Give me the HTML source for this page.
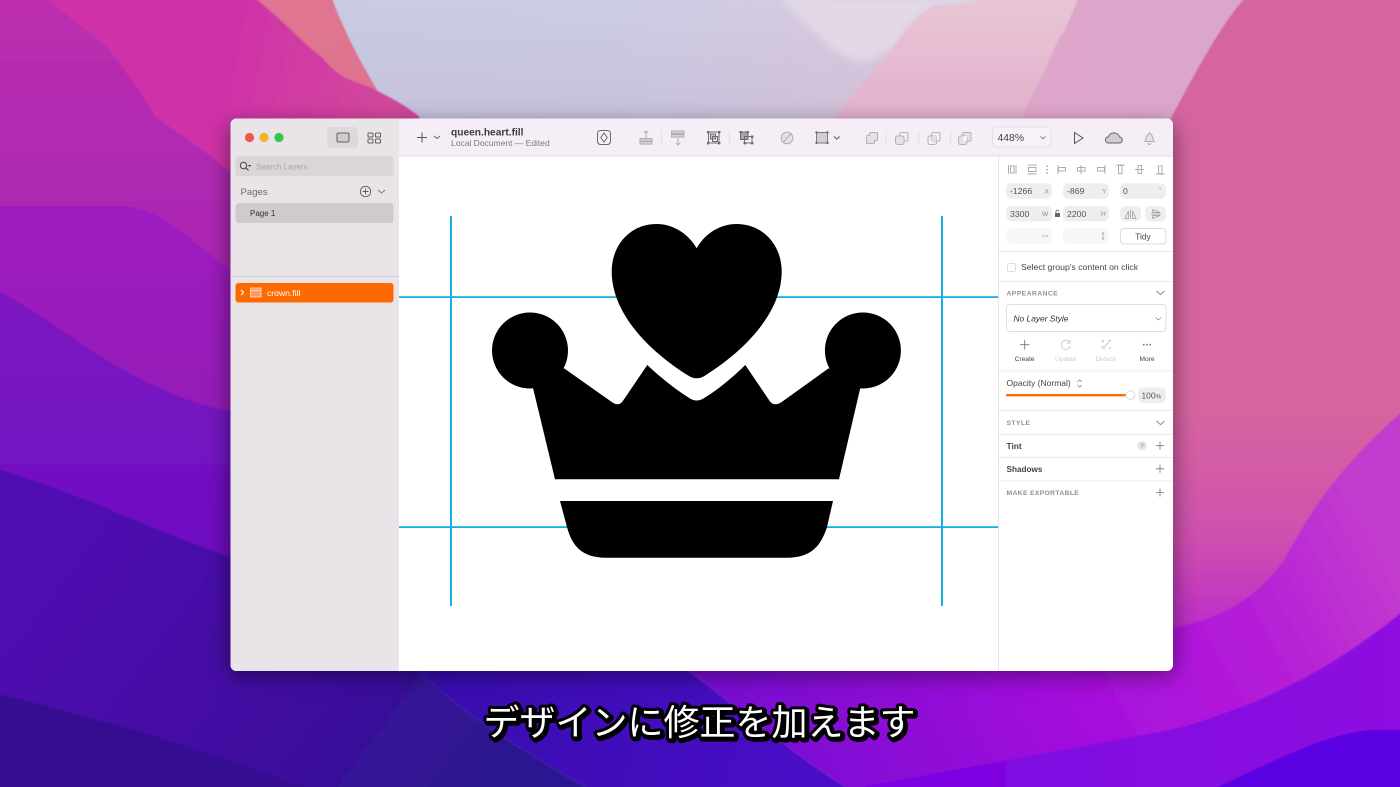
<!DOCTYPE html>
<html lang="ja">
<head>
<meta charset="utf-8">
<title>queen.heart.fill</title>
<style>
html,body{margin:0;padding:0;width:1400px;height:787px;overflow:hidden;background:#6010c0}
svg{display:block;position:absolute;left:0;top:0}
text{font-family:"Liberation Sans","Noto Sans CJK JP",sans-serif}
.il{fill:none;stroke:#b0adb0;stroke-width:1}
.pl{fill:none;stroke:#8c8c8c;stroke-width:1}
</style>
</head>
<body>
<svg width="1400" height="787" viewBox="0 0 1400 787" xmlns="http://www.w3.org/2000/svg">
<defs>
<linearGradient id="sky" gradientUnits="userSpaceOnUse" x1="330" x2="850" y1="0" y2="0"><stop offset="0" stop-color="#c9cce4"/><stop offset=".55" stop-color="#cccde4"/><stop offset="1" stop-color="#d8cbdf"/></linearGradient>
<linearGradient id="skyv" x1="0" x2="0" y1="0" y2="1"><stop offset="0" stop-color="#b8a0c4" stop-opacity="0"/><stop offset="1" stop-color="#b8a0c4" stop-opacity=".28"/></linearGradient>
<linearGradient id="sal" x1="0" x2="1" y1="0" y2="1"><stop offset="0" stop-color="#e17a94"/><stop offset="1" stop-color="#dc6c8a"/></linearGradient>
<linearGradient id="mag" gradientUnits="userSpaceOnUse" x1="100" x2="420" y1="0" y2="60"><stop offset=".45" stop-color="#cf33a8"/><stop offset=".9" stop-color="#d2469c"/></linearGradient>
<linearGradient id="pink" gradientUnits="userSpaceOnUse" x1="0" x2="0" y1="0" y2="787"><stop offset=".52" stop-color="#d6659f"/><stop offset=".68" stop-color="#ce50ae"/><stop offset=".8" stop-color="#bc2cc8"/><stop offset="1" stop-color="#a010dc"/></linearGradient>
<linearGradient id="bandp" x1="0" x2="0" y1="0" y2="1"><stop offset="0" stop-color="#e7c6d5"/><stop offset=".4" stop-color="#e3b0cc"/></linearGradient>
<linearGradient id="bandl" x1="0" x2="1" y1="0" y2="0"><stop offset="0" stop-color="#e0a6cb"/><stop offset="1" stop-color="#d8a6cc"/></linearGradient>
<linearGradient id="lb" gradientUnits="userSpaceOnUse" x1="0" x2="0" y1="0" y2="210"><stop offset="0" stop-color="#bc2eae"/><stop offset="1" stop-color="#ac28b2"/></linearGradient>
<linearGradient id="s2" gradientUnits="userSpaceOnUse" x1="0" x2="0" y1="207" y2="400"><stop offset="0" stop-color="#a01ec0"/><stop offset="1" stop-color="#941cb8"/></linearGradient>
<linearGradient id="s3" gradientUnits="userSpaceOnUse" x1="0" x2="0" y1="291" y2="540"><stop offset="0" stop-color="#7c14c0"/><stop offset="1" stop-color="#6e10c2"/></linearGradient>
<linearGradient id="s4" gradientUnits="userSpaceOnUse" x1="60" x2="470" y1="480" y2="787"><stop offset="0" stop-color="#5010b2"/><stop offset=".55" stop-color="#420ea2"/><stop offset="1" stop-color="#2c1490"/></linearGradient>
<linearGradient id="rm" gradientUnits="userSpaceOnUse" x1="780" x2="1340" y1="770" y2="470"><stop offset="0" stop-color="#7a0cd2"/><stop offset=".45" stop-color="#a40edc"/><stop offset=".75" stop-color="#b41cd8"/><stop offset="1" stop-color="#c23cce"/></linearGradient>
<linearGradient id="rm2" gradientUnits="userSpaceOnUse" x1="850" x2="1400" y1="0" y2="0"><stop offset="0" stop-color="#7804e2"/><stop offset="1" stop-color="#8e0ce0"/></linearGradient>
<linearGradient id="ctr" gradientUnits="userSpaceOnUse" x1="430" x2="840" y1="670" y2="787"><stop offset="0" stop-color="#380cae"/><stop offset="1" stop-color="#4a08c8"/></linearGradient>
<filter id="sh" x="-10%" y="-10%" width="120%" height="125%"><feGaussianBlur stdDeviation="11"/></filter>
<filter id="soft" x="-2%" y="-2%" width="104%" height="104%"><feGaussianBlur stdDeviation=".2"/></filter>
<filter id="bg" filterUnits="userSpaceOnUse" x="-20" y="-20" width="1440" height="830"><feGaussianBlur stdDeviation=".7"/></filter>
<filter id="bw" filterUnits="userSpaceOnUse" x="700" y="-20" width="320" height="140"><feGaussianBlur stdDeviation="3.5"/></filter>
<clipPath id="win"><rect x="230.5" y="118.5" width="942.5" height="552.5" rx="6"/></clipPath>
</defs>

<!-- wallpaper -->
<g filter="url(#bg)" transform="translate(700 393.5) scale(1.006) translate(-700 -393.5)">
<rect width="1400" height="787" fill="#c9cce4"/>
<rect x="300" width="800" height="320" fill="url(#sky)"/>
<rect x="300" y="0" width="800" height="125" fill="url(#skyv)"/>
<path d="M780,0 L830,50 Q850,66 870,62 L892,50 C900,40 910,20 932,8 Q965,7 990,0Z" fill="#e2d8e6" filter="url(#bw)"/>
<path d="M932,8 C910,20 900,40 892,50 L834,118 L834,300 L1100,300 L1076,0 L990,0 Q965,7 932,8Z" fill="url(#bandp)"/>
<path d="M1076,0 C1070,15 1065,30 1057,40 C1040,80 1030,95 1021,118 L1021,300 L1250,300 L1250,0Z" fill="url(#bandl)"/>
<path d="M1242,0 C1225,18 1205,50 1169,118 L1100,300 L1000,660 L1000,787 L1400,787 L1400,0Z" fill="url(#pink)"/>
<path d="M257,0 L334,0 C345,30 360,60 380,93 L421,118 L300,300 L0,300Z" fill="url(#sal)"/>
<path d="M0,0 H257 C285,22 305,45 325,60 C345,85 360,82 380,93 Q405,105 421,118 L421,300 L0,400Z" fill="url(#mag)"/>
<path d="M0,0 H49 C80,25 100,40 112,50 C130,75 143,90 158,118 C175,130 205,150 232,172 L420,300 L420,500 L0,500Z" fill="url(#lb)"/>
<path d="M0,207 H130 C170,212 190,240 232,269 L420,360 L420,600 L0,600Z" fill="url(#s2)"/>
<path d="M0,291 C40,310 70,335 100,354 C150,385 190,403 232,411 L420,500 L420,668 L0,700Z" fill="url(#s3)"/>
<path d="M0,468 C40,480 70,492 100,503 C150,525 190,540 232,556 L420,640 L420,668 C450,700 500,735 590,787 L0,787Z" fill="url(#s4)"/>
<path d="M0,692 C40,700 70,710 100,718 C170,735 250,765 312,787 L0,787Z" fill="#351090"/>
<path d="M420,640 L420,668 C450,700 500,735 590,787 L848,787 C786,748 730,700 687,668 L687,640Z" fill="url(#ctr)"/>
<path d="M1400,409 C1350,455 1320,486 1280,560 C1250,600 1220,615 1173,626 L1000,640 L687,640 L687,668 C730,700 786,748 848,787 L1400,787Z" fill="url(#rm)"/>
<path d="M1400,609 C1340,657 1280,696 1173,727 L848,787 H1400Z" fill="url(#rm2)"/>
<path d="M1400,728 L1370,728 C1330,730 1290,749 1210,787 H1400Z" fill="#5a02e2"/>
</g>

<!-- window shadow -->
<rect x="228" y="124" width="947" height="552" rx="8" fill="#000" opacity=".42" filter="url(#sh)"/>

<g clip-path="url(#win)">
<rect x="230" y="118" width="944" height="554" fill="#fff"/>
<rect x="230" y="118" width="169" height="554" fill="#e8e4e7"/>
<rect x="399" y="118" width="775" height="38" fill="#f6eef6"/>
<rect x="399" y="155.5" width="775" height="1" fill="#dfdadf"/>
<rect x="998" y="156" width="1" height="516" fill="#e6e6e6"/>
</g>

<!-- canvas guides -->
<g fill="#16b0e4">
<rect x="399" y="296.2" width="599" height="1.8"/>
<rect x="399" y="526.2" width="599" height="1.8"/>
<rect x="450" y="216" width="2" height="390"/>
<rect x="941" y="216" width="2" height="390"/>
</g>

<!-- crown -->
<g fill="#000">
<path d="M696.7,248.3 C688,233 672,224 656.7,224 C630,224 611.7,245 611.7,271.5 C611.7,312 647,350 689,376 C694,379 699.4,379 704.4,376 C746,350 781.7,312 781.7,271.5 C781.7,245 763,224 736.5,224 C721,224 705,233 696.7,248.3Z"/>
<circle cx="530" cy="350.5" r="38"/>
<circle cx="862.9" cy="350.5" r="38"/>
<path d="M533,388 L564,368.3 L612.5,402.5 Q618.5,406.5 622.5,401.5 L647.3,365 C662,379 678,391 690,398.5 Q696.7,402.5 703.4,398.5 C716,391 731,379 745.3,365 L770,401.5 Q774,406.5 781,402.5 L828.7,368.3 L860.3,388 L839,479.3 L555,479.3Z"/>
<path d="M560,501 L833,501 L827,527 C821,546 811,557.7 787,557.7 L606,557.7 C582,557.7 572,546 567,527Z"/>
</g>

<g filter="url(#soft)">
<!-- traffic lights -->
<circle cx="249.5" cy="137.5" r="4.6" fill="#f0584f"/>
<circle cx="264" cy="137.5" r="4.6" fill="#f4b42c"/>
<circle cx="279" cy="137.5" r="4.6" fill="#30c748"/>

<!-- view tabs -->
<rect x="327" y="127" width="31" height="21" rx="4" fill="#dcd8dc"/>
<rect x="337" y="133" width="12" height="9" rx="1.5" fill="#cfcbcf" stroke="#646264" stroke-width="1"/>
<g fill="none" stroke="#646264" stroke-width="1">
<rect x="368" y="133" width="5" height="4" rx=".8"/><rect x="375.5" y="133" width="5" height="4" rx=".8"/>
<rect x="368" y="139" width="5" height="4" rx=".8"/><rect x="375.5" y="139" width="5" height="4" rx=".8"/>
</g>

<!-- search -->
<rect x="235.5" y="156" width="158" height="20" rx="3" fill="#d9d5d9"/>
<circle cx="243.5" cy="165.5" r="3.2" fill="none" stroke="#444" stroke-width="1"/>
<path d="M246,168 L248.5,170.5" stroke="#444" stroke-width="1.1"/>
<path d="M248,165 h3.4 l-1.7,2z" fill="#444"/>
<text x="256" y="169.5" font-size="8" fill="#a8a5a8">Search Layers</text>

<!-- pages -->
<text x="240.5" y="195" font-size="9.6" fill="#6e6c6e">Pages</text>
<circle cx="365.5" cy="191.5" r="5.2" fill="none" stroke="#5e5c5e" stroke-width=".9"/>
<path d="M362.5,191.5 h6 M365.5,188.5 v6" stroke="#5e5c5e" stroke-width=".9"/>
<path d="M378,190 l3.5,3 l3.5,-3" fill="none" stroke="#7c7a7c" stroke-width=".9"/>
<rect x="235.5" y="203" width="158" height="20" rx="3.5" fill="#cecace"/>
<text x="250" y="216" font-size="8" fill="#333">Page 1</text>
<rect x="230" y="276" width="169" height="1" fill="#d2ced2"/>

<!-- layer row -->
<rect x="235.5" y="283" width="158" height="19.5" rx="3" fill="#fe6b00"/>
<path d="M241,290 l2.5,2.5 l-2.5,2.5" fill="none" stroke="#fff" stroke-width="1.1"/>
<rect x="250.5" y="288" width="10.5" height="9" fill="#ff9a5c" stroke="#ffd8c0" stroke-width=".9"/>
<path d="M250.5,290.5 h10.5" stroke="#ffd8c0" stroke-width=".9"/>
<text x="267" y="296" font-size="8.6" fill="#fff">crown.fill</text>

<!-- toolbar left -->
<path d="M417,137.5 h10 M422,132.5 v10" stroke="#555" stroke-width="1"/>
<path d="M434,136 l3,2.5 l3,-2.5" fill="none" stroke="#666" stroke-width="1"/>
<text x="451" y="135.5" font-size="10.2" font-weight="700" fill="#3c3a3c">queen.heart.fill</text>
<text x="451" y="146" font-size="8.5" fill="#7c7a7c">Local Document — Edited</text>

<!-- toolbar icons -->
<g>
<rect x="597.5" y="130.5" width="13" height="14" rx="3" fill="none" stroke="#6a686a" stroke-width="1"/>
<path d="M604,133 l3.2,4.5 l-3.2,4.5 l-3.2,-4.5z" fill="none" stroke="#6a686a" stroke-width="1"/>
<g class="il">
<path d="M646,131 v7 M643.8,133 l2.2,-2.2 l2.2,2.2"/>
<rect x="640" y="138.5" width="12" height="2.6" fill="#d4d1d4"/><rect x="640" y="141.5" width="12" height="2.6" fill="#d4d1d4"/>
<path d="M678,138 v7 M675.8,142.8 l2.2,2.2 l2.2,-2.2"/>
<rect x="671.5" y="131" width="12.5" height="2.6" fill="#d4d1d4"/><rect x="671.5" y="134.5" width="12.5" height="2.6" fill="#d4d1d4"/>
</g>
<path d="M661.5,131 v13 M729.5,131 v13 M886,131 v13 M918.6,131 v13 M950.5,131 v13" stroke="#e4dfe4" stroke-width="1"/>
<g fill="none" stroke="#6e6c6e" stroke-width="1">
<rect x="708.5" y="132" width="10.5" height="11"/>
<rect x="710.5" y="134" width="5" height="5" fill="#c8c4c8"/><rect x="712.5" y="136.5" width="5" height="5"/>
</g>
<g fill="#6e6c6e"><rect x="707" y="131" width="2.4" height="2.4"/><rect x="718" y="131" width="2.4" height="2.4"/><rect x="707" y="142" width="2.4" height="2.4"/><rect x="718" y="142" width="2.4" height="2.4"/></g>
<rect x="740.5" y="132" width="7.5" height="7.5" fill="#a8a5a8" stroke="#6e6c6e"/>
<rect x="744.5" y="136.5" width="7.5" height="6.5" fill="none" stroke="#6e6c6e"/>
<g fill="#6e6c6e"><rect x="739.5" y="131" width="2.4" height="2.4"/><rect x="746.5" y="131" width="2.4" height="2.4"/><rect x="743.5" y="142" width="2.4" height="2.4"/><rect x="751" y="142" width="2.4" height="2.4"/><rect x="751" y="135.5" width="2.4" height="2.4"/></g>
<circle cx="787" cy="138" r="5.8" fill="#e4e0e4" stroke="#b0adb0"/>
<path d="M783,142.5 L791.5,133" stroke="#b0adb0" stroke-width="1"/>
<rect x="816.5" y="132.5" width="11" height="10.5" fill="#d2cfd2" stroke="#7c7a7c"/>
<g fill="#6e6c6e"><circle cx="816.5" cy="132.5" r="1.2"/><circle cx="827.5" cy="132.5" r="1.2"/><circle cx="816.5" cy="143" r="1.2"/><circle cx="827.5" cy="143" r="1.2"/></g>
<path d="M834,136.5 l2.8,2.6 l2.8,-2.6" fill="none" stroke="#555" stroke-width="1"/>
<g fill="none" stroke="#b4b1b4" stroke-width="1">
<path d="M870,132.5 h6.5 a1,1 0 0 1 1,1 v6 a1,1 0 0 1 -1,1 h-2 v2 a1,1 0 0 1 -1,1 h-6 a1,1 0 0 1 -1,-1 v-6 a1,1 0 0 1 1,-1 h2 v-2 a1,1 0 0 1 1,-1z" fill="#e4e0e4"/>
<rect x="899.5" y="132.5" width="8.5" height="8.5" rx="1.5" fill="#f6eef6"/><rect x="895.5" y="136" width="8.5" height="8.5" rx="2" fill="#e4e0e4"/>
<rect x="931.5" y="132.5" width="8.5" height="8.5" rx="1.5"/><rect x="928" y="136" width="8.5" height="8.5" rx="2"/><rect x="931.5" y="136" width="5" height="5" fill="#e4e0e4" stroke="none"/>
<rect x="962.5" y="132.5" width="8.5" height="8.5" rx="1.5" fill="#e4e0e4"/><rect x="958.5" y="136" width="8.5" height="8.5" rx="2" fill="#e4e0e4"/><rect x="962.5" y="136" width="4.5" height="5" fill="#f6eef6" stroke="none"/>
</g>
</g>

<!-- zoom field -->
<rect x="992.5" y="127" width="58.5" height="20" rx="5" fill="#f8f2f8" stroke="#e4dfe4"/>
<text x="997.5" y="141" font-size="10.4" fill="#444">448%</text>
<path d="M1040.5,136.5 l2.5,2.2 l2.5,-2.2" fill="none" stroke="#777" stroke-width=".9"/>
<path d="M1074.5,132.5 L1083,138 L1074.5,143.5z" fill="none" stroke="#555" stroke-width="1"/>
<path d="M1108,143 h11 a3,3 0 0 0 .6,-6 a6,6 0 0 0 -11.3,-.3 a3.2,3.2 0 0 0 -.3,6.3z" fill="#d0cdd0" stroke="#666466" stroke-width="1"/>
<path d="M1145,141.5 c1.2,-1.2 .8,-7.2 4.5,-8 c3.7,.8 3.3,6.8 4.5,8z M1147.8,143.2 a1.8,1.8 0 0 0 3.4,0 M1149.5,133.5 v-1.5" fill="#e4e0e4" stroke="#b0adb0" stroke-width="1"/>

<!-- align icons -->
<g class="il">
<path d="M1008.5,165 v9 M1016,165 v9"/><rect x="1010.5" y="166" width="3.5" height="7"/>
<path d="M1027.5,165 h9.5 M1027.5,174 h9.5"/><rect x="1028.5" y="167.5" width="7.5" height="4"/>
<path d="M1058,165 v9"/><rect x="1058.5" y="167.5" width="7" height="3.5"/>
<path d="M1081,165 v9"/><rect x="1077.5" y="167.5" width="7.5" height="3.5"/>
<path d="M1105,165 v9"/><rect x="1097.5" y="167.5" width="7" height="3.5"/>
<path d="M1116,165 h9"/><rect x="1118.5" y="165.5" width="3.5" height="8"/>
<path d="M1135,169.5 h9"/><rect x="1138" y="165.5" width="3.5" height="8"/>
<path d="M1156,174 h9"/><rect x="1158.5" y="166" width="3.5" height="7.5"/>
</g>
<g fill="#8a868a"><circle cx="1047" cy="166" r=".8"/><circle cx="1047" cy="169.5" r=".8"/><circle cx="1047" cy="173" r=".8"/></g>

<!-- fields -->
<g fill="#eeeeee">
<rect x="1006" y="183.3" width="46" height="15.4" rx="5"/>
<rect x="1063" y="183.3" width="46" height="15.4" rx="5"/>
<rect x="1120" y="183.3" width="46" height="15.4" rx="5"/>
<rect x="1006" y="206" width="46" height="15.4" rx="5"/>
<rect x="1063" y="206" width="46" height="15.4" rx="5"/>
<rect x="1120" y="206" width="21" height="15.4" rx="5"/>
<rect x="1145" y="206" width="21" height="15.4" rx="5"/>
<rect x="1006" y="228.3" width="46" height="15.4" rx="5" fill="#f7f7f7"/>
<rect x="1063" y="228.3" width="46" height="15.4" rx="5" fill="#f7f7f7"/>
<rect x="1138" y="387.5" width="28" height="15.5" rx="5"/>
</g>
<g font-size="8.7" fill="#555">
<text x="1010" y="194">-1266</text>
<text x="1067" y="194">-869</text>
<text x="1123" y="194">0</text>
<text x="1010" y="217">3300</text>
<text x="1067" y="217">2200</text>
</g>
<g font-size="6.5" fill="#8c8c8c">
<text x="1044.5" y="193.5">X</text>
<text x="1102" y="193.5">Y</text>
<text x="1159" y="192">°</text>
<text x="1042" y="216">W</text>
<text x="1101" y="216">H</text>
</g>
<rect x="1055" y="213" width="5" height="4" fill="#666"/>
<path d="M1056,213 v-1.5 a1.5,1.5 0 0 1 3,0" fill="none" stroke="#666" stroke-width=".8"/>
<path d="M1130.5,209.5 v9 M1128.5,211 L1125,218.5 H1128.5z M1132.5,211 L1136,218.5 H1132.5z" fill="none" stroke="#9a979a" stroke-width=".7"/>
<path d="M1151,214 h10 M1152.5,212.5 L1160,212.5 L1152.5,209.5z M1152.5,215.5 L1160,215.5 L1152.5,218.5z" fill="none" stroke="#9a979a" stroke-width=".7"/>
<path d="M1042,236 h6 M1043.5,234.8 l-1.5,1.2 l1.5,1.2 M1046.5,234.8 l1.5,1.2 l-1.5,1.2" fill="none" stroke="#c4c4c4" stroke-width=".8"/>
<path d="M1103,232.5 v7 M1101.8,234 l1.2,-1.5 l1.2,1.5 M1101.8,238 l1.2,1.5 l1.2,-1.5" fill="none" stroke="#b0b0b0" stroke-width=".8"/>
<rect x="1120.5" y="228.5" width="45.5" height="15.5" rx="3.5" fill="#fff" stroke="#dcdcdc"/>
<text x="1143" y="239.5" font-size="8.4" fill="#444" text-anchor="middle">Tidy</text>

<!-- dividers -->
<g fill="#ececec">
<rect x="999" y="251" width="174" height="1"/>
<rect x="999" y="281" width="174" height="1"/>
<rect x="999" y="370.3" width="174" height="1"/>
<rect x="999" y="410" width="174" height="1"/>
<rect x="999" y="434" width="174" height="1"/>
<rect x="999" y="457" width="174" height="1"/>
<rect x="999" y="480.5" width="174" height="1"/>
</g>

<rect x="1007.5" y="263.5" width="8" height="8" rx="1.8" fill="#fff" stroke="#dcdcdc"/>
<text x="1021" y="270" font-size="8.7" fill="#444">Select group's content on click</text>

<text x="1006.5" y="295.5" font-size="6.8" letter-spacing=".4" font-weight="700" fill="#909090">APPEARANCE</text>
<path d="M1156.5,291 l4,3.6 l4,-3.6" class="pl"/>

<rect x="1006.5" y="304.5" width="159.5" height="27" rx="3.5" fill="#fff" stroke="#dedede"/>
<text x="1013.5" y="321.5" font-size="8.4" font-style="italic" fill="#333">No Layer Style</text>
<path d="M1155.5,317.5 l2.8,2.5 l2.8,-2.5" fill="none" stroke="#888" stroke-width=".8"/>

<path d="M1020,344.7 h9.5 M1024.7,340 v9.5" stroke="#777" stroke-width=".9"/>
<path d="M1069.5,342 a4.6,4.6 0 1 0 .8,4 M1070,340 v3 h-3" fill="none" stroke="#c8c8c8" stroke-width=".9"/>
<path d="M1102,349 l9,-9 M1102,342 l2,-2 M1109,349 l2,-2 M1102,340 l1,3 M1108,340 l3,1 M1102,346 l3,3" fill="none" stroke="#c8c8c8" stroke-width=".9"/>
<g fill="#777"><circle cx="1143.8" cy="344.7" r=".9"/><circle cx="1147" cy="344.7" r=".9"/><circle cx="1150.2" cy="344.7" r=".9"/></g>
<g font-size="6.6" text-anchor="middle">
<text x="1024.7" y="361" fill="#444">Create</text>
<text x="1065.7" y="361" fill="#cfcfcf">Update</text>
<text x="1106" y="361" fill="#cfcfcf">Detach</text>
<text x="1147" y="361" fill="#444">More</text>
</g>

<text x="1006.5" y="386" font-size="8.5" fill="#444">Opacity (Normal)</text>
<path d="M1077.5,382 l2.2,-2.2 l2.2,2.2 M1077.5,385 l2.2,2.2 l2.2,-2.2" fill="none" stroke="#888" stroke-width=".8"/>
<rect x="1006" y="394" width="120" height="2.4" rx="1" fill="#fb6a00"/>
<circle cx="1130.5" cy="395" r="4.4" fill="#fff" stroke="#dcdcdc"/>
<text x="1141.5" y="398.3" font-size="8.4" fill="#555">100<tspan font-size="6.5">%</tspan></text>

<text x="1006.5" y="425.2" font-size="6.8" letter-spacing=".4" font-weight="700" fill="#909090">STYLE</text>
<path d="M1156.5,421 l4,3.6 l4,-3.6" class="pl"/>

<text x="1006.5" y="448.8" font-size="8.4" font-weight="700" fill="#444">Tint</text>
<circle cx="1142" cy="445.6" r="4.6" fill="#e4e4e4"/>
<text x="1142" y="447.8" font-size="6" fill="#888" text-anchor="middle">?</text>
<path d="M1156,445.6 h8 M1160,441.6 v8" class="pl"/>

<text x="1006.5" y="472.2" font-size="8.2" font-weight="700" fill="#444">Shadows</text>
<path d="M1156,468.8 h8 M1160,464.8 v8" class="pl"/>

<text x="1006.5" y="495.2" font-size="6.8" letter-spacing=".32" font-weight="700" fill="#909090">MAKE EXPORTABLE</text>
<path d="M1156,492.5 h8 M1160,488.5 v8" class="pl"/>
</g>

<!-- caption -->
<text x="699.5" y="735" font-size="36" text-anchor="middle" fill="#000" stroke="#000" stroke-width="7" stroke-linejoin="round" transform="translate(1.5,1.5)" style="font-family:'Liberation Sans','WenQuanYi Zen Hei','Noto Sans CJK JP',sans-serif">デザインに修正を加えます</text>
<text x="699.5" y="735" font-size="36" text-anchor="middle" fill="#fff" stroke="#000" stroke-width="6" stroke-linejoin="round" paint-order="stroke" style="font-family:'Liberation Sans','WenQuanYi Zen Hei','Noto Sans CJK JP',sans-serif">デザインに修正を加えます</text>
</svg>
</body>
</html>
